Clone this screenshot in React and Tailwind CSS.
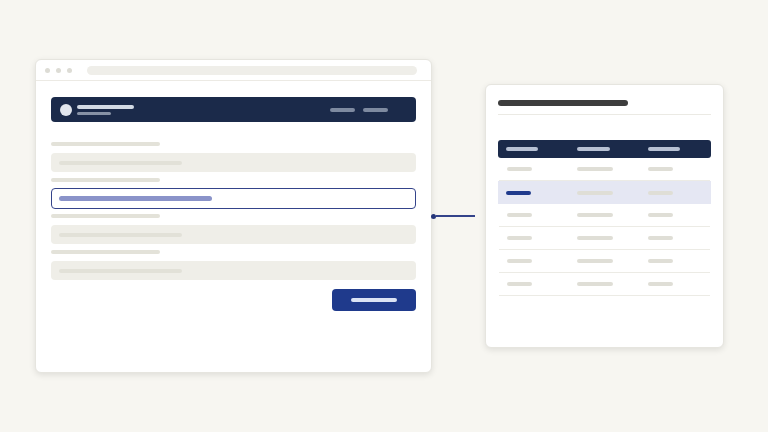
import React from 'react';

const navy = 'bg-[#1b2a4a]';

const Field = ({ focused, last }) => (
    <div className={last ? '' : 'mb-[6px]'}>
        <div className="h-[4px] w-[109px] rounded-full bg-[#e3e2d9] mb-[7px]" />
        {focused ? (
            <div className="h-[21px] -my-[1px] rounded-[4px] border-[1.5px] border-[#34438a] bg-white flex items-center pl-[7px]">
                <div className="h-[5px] w-[153px] rounded-full bg-[#8a93c9]" />
            </div>
        ) : (
            <div className="h-[19px] rounded-[4px] bg-[#efeee8] flex items-center pl-[8px]">
                <div className="h-[4px] w-[123px] rounded-full bg-[#e2e1d8]" />
            </div>
        )}
    </div>
);

const rows = [
    { active: false },
    { active: true },
    { active: false },
    { active: false },
    { active: false },
    { active: false },
];

const FormWindow = () => (
    <div className="w-[397px] h-[314px] shrink-0 bg-white rounded-[6px] border border-[#e6e5df] shadow-[0_2px_6px_rgba(0,0,0,0.10)] flex flex-col overflow-hidden">
        <div className="h-[21px] border-b border-[#eceae4] flex items-center pl-[9px] pr-[14px] gap-[6px]">
            <div className="w-[5px] h-[5px] rounded-full bg-[#dddcd5]" />
            <div className="w-[5px] h-[5px] rounded-full bg-[#dddcd5]" />
            <div className="w-[5px] h-[5px] rounded-full bg-[#dddcd5]" />
            <div className="ml-[9px] flex-1 h-[9px] rounded-full bg-[#efeee9]" />
        </div>
        <div className="px-[15px] pt-[16px] flex flex-col">
            <div className={`h-[25px] rounded-[4px] ${navy} flex items-center pl-[9px] pr-[28px]`}>
                <div className="w-[12px] h-[12px] rounded-full bg-[#e2e6ee]" />
                <div className="ml-[5px] flex flex-col gap-[3px]">
                    <div className="h-[4px] w-[57px] rounded-full bg-[#d3dae5]" />
                    <div className="h-[3px] w-[34px] rounded-full bg-[#8792a6]" />
                </div>
                <div className="ml-auto flex gap-[8px]">
                    <div className="h-[4px] w-[25px] rounded-full bg-[#7e8aa0]" />
                    <div className="h-[4px] w-[25px] rounded-full bg-[#7e8aa0]" />
                </div>
            </div>
            <div className="mt-[20px]">
                <Field />
                <Field focused />
                <Field />
                <Field last />
            </div>
            <div className="mt-[9px] flex justify-end">
                <div className="w-[84px] h-[22px] rounded-[4px] bg-[#1f3a8c] flex items-center justify-center">
                    <div className="h-[4px] w-[46px] rounded-full bg-[#dbe3f4]" />
                </div>
            </div>
        </div>
    </div>
);

const TableCard = () => (
    <div className="w-[239px] h-[264px] shrink-0 bg-white rounded-[6px] border border-[#e6e5df] shadow-[0_2px_6px_rgba(0,0,0,0.10)] px-[12px] pt-[15px]">
        <div className="h-[6px] w-[130px] rounded-full bg-[#3d3d3d]" />
        <div className="mt-[8px] h-px bg-[#ebeae4]" />
        <div className={`mt-[25px] h-[18px] rounded-[3px] ${navy} grid grid-cols-3 items-center`}>
            <div className="pl-[8px]"><div className="h-[4px] w-[32px] rounded-full bg-[#b7c1d4]" /></div>
            <div className="pl-[8px]"><div className="h-[4px] w-[33px] rounded-full bg-[#b7c1d4]" /></div>
            <div className="pl-[8px]"><div className="h-[4px] w-[32px] rounded-full bg-[#b7c1d4]" /></div>
        </div>
        {rows.map((r, i) => (
            <div
                key={i}
                className={`h-[23px] grid grid-cols-3 items-center ${r.active ? 'bg-[#e5e7f3]' : 'border-b border-[#ecebe5] mx-[1px]'}`}
            >
                <div className="pl-[8px]">
                    <div className={`h-[4px] w-[25px] rounded-full ${r.active ? 'bg-[#1f3a8c]' : 'bg-[#dfded6]'}`} />
                </div>
                <div className="pl-[8px]"><div className="h-[4px] w-[36px] rounded-full bg-[#dfded6]" /></div>
                <div className="pl-[8px]"><div className="h-[4px] w-[25px] rounded-full bg-[#dfded6]" /></div>
            </div>
        ))}
    </div>
);

export default function App() {
    return (
        <div className="w-[768px] h-[432px] bg-[#f7f6f1] pl-[35px] pt-[59px]">
            <div className="flex items-center">
                <FormWindow />
                <div className="w-[53px] shrink-0 flex items-center">
                    <div className="-ml-[1px] w-[5px] h-[5px] rounded-full bg-[#25357a]" />
                    <div className="w-[39px] h-[1.5px] bg-[#34438a]" />
                </div>
                <TableCard />
            </div>
        </div>
    );
}
